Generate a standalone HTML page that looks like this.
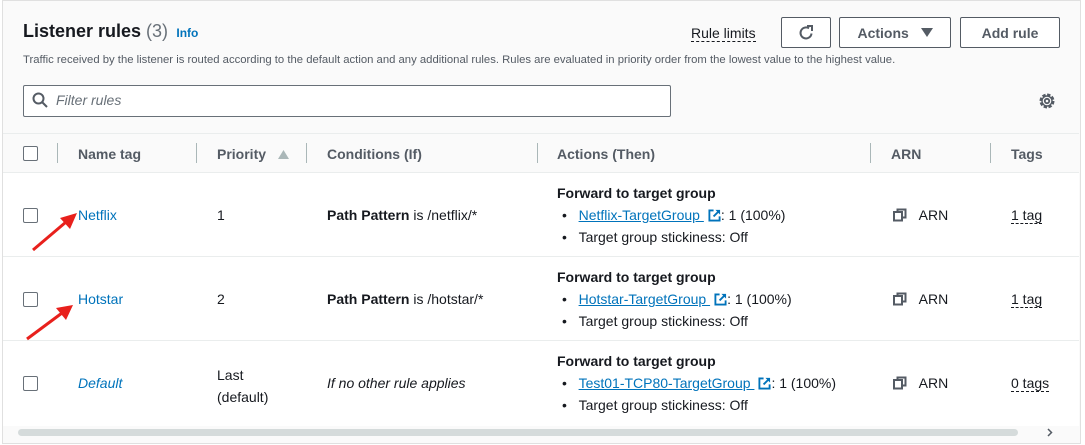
<!DOCTYPE html><html><head><style>
body{margin:0;width:1085px;height:445px;overflow:hidden;background:#fff;font-family:"Liberation Sans",sans-serif;color:#16191f;position:relative}
.box{position:absolute;left:2px;top:0;width:1077px;height:442px;border:1px solid #e0e0e0;background:#fafafa}
.a{position:absolute;white-space:nowrap}
.btn{position:absolute;top:17px;height:31px;border:1px solid #545b64;border-radius:2px;background:#fff;font-weight:bold;font-size:14px;color:#545b64;display:flex;align-items:center;justify-content:center;box-sizing:border-box}
.cb{position:absolute;left:23px;width:13px;height:13px;border:1px solid #687078;border-radius:2px;background:#fff}
.hd{position:absolute;top:146px;font-weight:bold;font-size:14px;color:#545b64}
.sep{position:absolute;top:143px;width:1px;height:20px;background:#aab7b8}
.row{position:absolute;left:3px;width:1076px;background:#fff;border-top:1px solid #eaeded;font-size:14px}
.lnk{color:#0073bb;text-decoration:underline}
.t{font-size:14px}
.ext{display:inline-block;vertical-align:-2px;margin-left:4px}
</style></head><body>
<div class="box"></div>
<div class="a" style="left:23px;top:21px;font-size:18px;font-weight:bold">Listener rules <span style="font-weight:normal;color:#687078">(3)</span> <span style="font-size:12px;color:#0073bb;font-weight:bold">&nbsp;Info</span></div>
<div class="a" style="left:23px;top:54px;font-size:11.3px;color:#545b64">Traffic received by the listener is routed according to the default action and any additional rules. Rules are evaluated in priority order from the lowest value to the highest value.</div>
<div class="a" style="left:691px;top:25px;font-size:14px;border-bottom:1px dashed #16191f">Rule limits</div>
<div class="btn" style="left:781px;width:50px"><svg width="18" height="18" viewBox="0 0 18 18"><path d="M14.5 9.5A5.5 5.5 0 1 1 12 4.3" fill="none" stroke="#545b64" stroke-width="2"/><path d="M10 2h5v5" fill="none" stroke="#545b64" stroke-width="2"/></svg></div>
<div class="btn" style="left:839px;width:112px">Actions&nbsp;&nbsp;&nbsp;<svg width="12" height="9" viewBox="0 0 12 9"><path d="M0 0h12L6 9z" fill="#545b64"/></svg></div>
<div class="btn" style="left:960px;width:100px">Add rule</div>
<div class="a" style="left:23px;top:85px;width:646px;height:30px;border:1px solid #687078;border-radius:2px;background:#fff"></div>
<svg class="a" style="left:32px;top:92px" width="16" height="16" viewBox="0 0 16 16"><circle cx="6.5" cy="6.5" r="5" fill="none" stroke="#545b64" stroke-width="2"/><path d="M10 10l5 5" stroke="#545b64" stroke-width="2"/></svg>
<div class="a" style="left:56px;top:92px;font-size:14px;font-style:italic;color:#687078">Filter rules</div>
<svg class="a" style="left:1038px;top:92px" width="18" height="18" viewBox="0 0 18 18"><circle cx="9" cy="9" r="6" fill="none" stroke="#545b64" stroke-width="3" stroke-dasharray="3.2 1.5"/><circle cx="9" cy="9" r="5" fill="none" stroke="#545b64" stroke-width="1.4"/><circle cx="9" cy="9" r="2.2" fill="none" stroke="#545b64" stroke-width="1.8"/></svg>
<div class="row" style="top:133px;height:38px;background:#fafafa"></div>
<div class="cb" style="top:146px"></div>
<div class="sep" style="left:57px"></div><div class="sep" style="left:196px"></div><div class="sep" style="left:306px"></div><div class="sep" style="left:537px"></div><div class="sep" style="left:870px"></div><div class="sep" style="left:990px"></div>
<div class="hd" style="left:78px">Name tag</div><div class="hd" style="left:217px">Priority <svg width="11" height="9" viewBox="0 0 11 9" style="margin-left:8px"><path d="M0 9h11L5.5 0z" fill="#aab7b8"/></svg></div><div class="hd" style="left:327px">Conditions (If)</div><div class="hd" style="left:557px">Actions (Then)</div><div class="hd" style="left:891px">ARN</div><div class="hd" style="left:1011px">Tags</div>

<div class="row" style="top:172px;height:83px"></div>
<div class="row" style="top:256px;height:83px"></div>
<div class="row" style="top:340px;height:85px"></div>

<svg width="0" height="0" style="position:absolute"><defs>
<symbol id="ex" viewBox="0 0 14 14"><path d="M6 1.5H1.5v11h11V8" fill="none" stroke="#0073bb" stroke-width="2"/><path d="M8 1h5v5z" fill="#0073bb"/><path d="M12 2L6 8" stroke="#0073bb" stroke-width="2"/></symbol>
<symbol id="cp" viewBox="0 0 14 14"><rect x="1" y="4" width="8" height="8.5" fill="none" stroke="#545b64" stroke-width="2"/><path d="M4.5 4V1.5h8v8H9" fill="none" stroke="#545b64" stroke-width="2"/></symbol>
</defs></svg>

<!-- row1 -->
<div class="cb" style="top:208px"></div>
<div class="a t" style="left:78px;top:207px;color:#0073bb">Netflix</div>
<div class="a t" style="left:217px;top:207px">1</div>
<div class="a t" style="left:327px;top:207px"><b>Path Pattern</b> is /netflix/*</div>
<div class="a t" style="left:557px;top:185px;font-weight:bold">Forward to target group</div>
<div class="a t" style="left:562px;top:207px">•&nbsp;&nbsp;&nbsp;<span class="lnk">Netflix-TargetGroup&nbsp;<svg class="ext" width="13" height="13"><use href="#ex"/></svg></span>: 1 (100%)</div>
<div class="a t" style="left:562px;top:229px">•&nbsp;&nbsp;&nbsp;Target group stickiness: Off</div>
<div class="a t" style="left:893px;top:207px"><svg width="14" height="14" style="vertical-align:-2px"><use href="#cp"/></svg>&nbsp;&nbsp;&nbsp;ARN</div>
<div class="a t" style="left:1011px;top:207px;border-bottom:1px dashed #16191f">1 tag</div>
<!-- row2 -->
<div class="cb" style="top:292px"></div>
<div class="a t" style="left:78px;top:291px;color:#0073bb">Hotstar</div>
<div class="a t" style="left:217px;top:291px">2</div>
<div class="a t" style="left:327px;top:291px"><b>Path Pattern</b> is /hotstar/*</div>
<div class="a t" style="left:557px;top:269px;font-weight:bold">Forward to target group</div>
<div class="a t" style="left:562px;top:291px">•&nbsp;&nbsp;&nbsp;<span class="lnk">Hotstar-TargetGroup&nbsp;<svg class="ext" width="13" height="13"><use href="#ex"/></svg></span>: 1 (100%)</div>
<div class="a t" style="left:562px;top:313px">•&nbsp;&nbsp;&nbsp;Target group stickiness: Off</div>
<div class="a t" style="left:893px;top:291px"><svg width="14" height="14" style="vertical-align:-2px"><use href="#cp"/></svg>&nbsp;&nbsp;&nbsp;ARN</div>
<div class="a t" style="left:1011px;top:291px;border-bottom:1px dashed #16191f">1 tag</div>
<!-- row3 -->
<div class="cb" style="top:376px"></div>
<div class="a t" style="left:78px;top:375px;color:#0073bb;font-style:italic">Default</div>
<div class="a t" style="left:217px;top:364px;line-height:22px">Last<br>(default)</div>
<div class="a t" style="left:327px;top:375px;font-style:italic">If no other rule applies</div>
<div class="a t" style="left:557px;top:353px;font-weight:bold">Forward to target group</div>
<div class="a t" style="left:562px;top:375px">•&nbsp;&nbsp;&nbsp;<span class="lnk">Test01-TCP80-TargetGroup&nbsp;<svg class="ext" width="13" height="13"><use href="#ex"/></svg></span>: 1 (100%)</div>
<div class="a t" style="left:562px;top:397px">•&nbsp;&nbsp;&nbsp;Target group stickiness: Off</div>
<div class="a t" style="left:893px;top:375px"><svg width="14" height="14" style="vertical-align:-2px"><use href="#cp"/></svg>&nbsp;&nbsp;&nbsp;ARN</div>
<div class="a t" style="left:1011px;top:375px;border-bottom:1px dashed #16191f">0 tags</div>
<!-- scrollbar -->
<div class="a" style="left:18px;top:429px;width:1000px;height:7px;border-radius:4px;background:#d5dbdb"></div>
<svg class="a" style="left:1047px;top:428px" width="6" height="9" viewBox="0 0 6 9"><path d="M1 1l3.5 3.5L1 8" fill="none" stroke="#545b64" stroke-width="1.5"/></svg>
<!-- arrows -->
<svg class="a" style="left:0;top:0" width="1085" height="445"><g stroke="#e8201c" stroke-width="3" fill="#e8201c"><line x1="33" y1="250" x2="66" y2="222"/><polygon points="77,213 60,218 70,229" stroke="none"/><line x1="27" y1="339" x2="62" y2="313"/><polygon points="73,305 56,308 66,320" stroke="none"/></g></svg>
</body></html>
